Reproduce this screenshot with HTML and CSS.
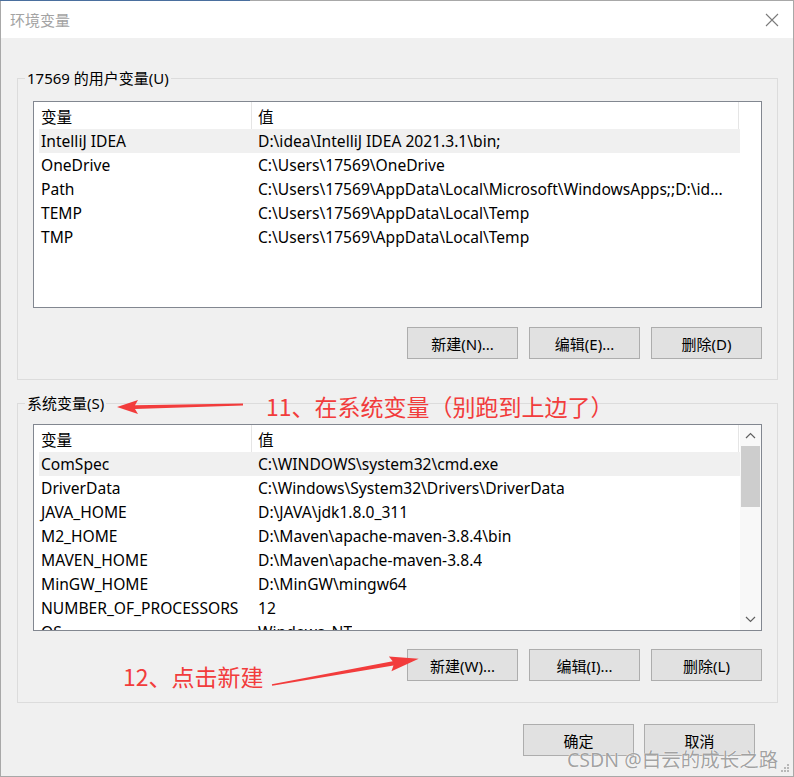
FILE: index.html
```html
<!DOCTYPE html>
<html lang="zh-CN">
<head>
<meta charset="utf-8">
<title>环境变量</title>
<link rel="stylesheet" href="styles.css">
</head>
<body>
<div class="window">
  <div class="titlebar">
    <span class="title">环境变量</span>
    <svg class="close" width="14" height="14" viewBox="0 0 14 14"><path d="M1 1L13 13M13 1L1 13" stroke="#7a7a7a" stroke-width="1.1" fill="none"/></svg>
  </div>
  <div class="content">
    <fieldset class="group group-user">
      <legend>17569 的用户变量(U)</legend>
      <div class="list">
        <div class="list-body">
          <div class="list-head"><div class="hcell hname">变量</div><div class="hcell hval">值</div></div>
          <div class="row sel"><div class="cname">IntelliJ IDEA</div><div class="cval">D:\idea\IntelliJ IDEA 2021.3.1\bin;</div></div>
          <div class="row"><div class="cname">OneDrive</div><div class="cval">C:\Users\17569\OneDrive</div></div>
          <div class="row"><div class="cname">Path</div><div class="cval">C:\Users\17569\AppData\Local\Microsoft\WindowsApps;;D:\id...</div></div>
          <div class="row"><div class="cname">TEMP</div><div class="cval">C:\Users\17569\AppData\Local\Temp</div></div>
          <div class="row"><div class="cname">TMP</div><div class="cval">C:\Users\17569\AppData\Local\Temp</div></div>
        </div>
      </div>
      <div class="btns">
        <button class="btn">新建(N)...</button>
        <button class="btn">编辑(E)...</button>
        <button class="btn">删除(D)</button>
      </div>
    </fieldset>

    <fieldset class="group group-sys">
      <legend>系统变量(S)</legend>
      <div class="list">
        <div class="list-body">
          <div class="list-head"><div class="hcell hname">变量</div><div class="hcell hval">值</div></div>
          <div class="row sel"><div class="cname">ComSpec</div><div class="cval">C:\WINDOWS\system32\cmd.exe</div></div>
          <div class="row"><div class="cname">DriverData</div><div class="cval">C:\Windows\System32\Drivers\DriverData</div></div>
          <div class="row"><div class="cname">JAVA_HOME</div><div class="cval">D:\JAVA\jdk1.8.0_311</div></div>
          <div class="row"><div class="cname">M2_HOME</div><div class="cval">D:\Maven\apache-maven-3.8.4\bin</div></div>
          <div class="row"><div class="cname">MAVEN_HOME</div><div class="cval">D:\Maven\apache-maven-3.8.4</div></div>
          <div class="row"><div class="cname">MinGW_HOME</div><div class="cval">D:\MinGW\mingw64</div></div>
          <div class="row"><div class="cname">NUMBER_OF_PROCESSORS</div><div class="cval">12</div></div>
          <div class="row"><div class="cname">OS</div><div class="cval">Windows_NT</div></div>
        </div>
        <div class="scrollbar">
          <div class="sb-btn"><svg width="11" height="7" viewBox="0 0 11 7"><path d="M1 6L5.5 1.5L10 6" stroke="#606060" stroke-width="1.2" fill="none"/></svg></div>
          <div class="sb-thumb"></div>
          <div class="sb-track"></div>
          <div class="sb-btn"><svg width="11" height="7" viewBox="0 0 11 7"><path d="M1 1L5.5 5.5L10 1" stroke="#606060" stroke-width="1.2" fill="none"/></svg></div>
        </div>
      </div>
      <div class="btns btns-sys">
        <button class="btn">新建(W)...</button>
        <button class="btn">编辑(I)...</button>
        <button class="btn">删除(L)</button>
      </div>
    </fieldset>

    <div class="footer">
      <button class="btn">确定</button>
      <button class="btn">取消</button>
    </div>
  </div>

  <div class="note note-11">11、在系统变量（别跑到上边了）</div>
  <svg class="arrow arrow-11" width="140" height="24" viewBox="0 0 140 24">
    <polygon points="7,12 28,5 25,10.2 133,8.6 133,10.6 25,14 28,19" fill="#f23c3c"/>
  </svg>
  <div class="note note-12">12、点击新建</div>
  <svg class="arrow arrow-12" width="160" height="50" viewBox="0 0 160 50">
    <g transform="translate(7,40) rotate(-10.1)">
      <polygon points="0,-0.8 123,-2.2 120,-7.5 149,0 120,7.5 123,2.2 0,0.8" fill="#f23c3c"/>
    </g>
  </svg>
  <div class="watermark">CSDN @白云的成长之路</div>
  <svg class="grip" width="10" height="10" viewBox="0 0 10 10">
    <rect x="7" y="1" width="2" height="2" fill="#b8b8b8"/>
    <rect x="4" y="4" width="2" height="2" fill="#b8b8b8"/>
    <rect x="7" y="4" width="2" height="2" fill="#b8b8b8"/>
    <rect x="1" y="7" width="2" height="2" fill="#b8b8b8"/>
    <rect x="4" y="7" width="2" height="2" fill="#b8b8b8"/>
    <rect x="7" y="7" width="2" height="2" fill="#b8b8b8"/>
  </svg>
</div>
</body>
</html>
```

FILE: styles.css
```css
* { box-sizing: border-box; }
html, body { margin: 0; padding: 0; }
body {
  width: 794px;
  height: 777px;
  overflow: hidden;
  font-family: "Noto Sans", "Noto Sans CJK SC", sans-serif;
  font-size: 15px;
  color: #000;
  background: #f0f0f0;
}
.window {
  position: relative;
  width: 794px;
  height: 777px;
  background: #f0f0f0;
  border-left: 1px solid #a8a8a8;
  border-right: 1px solid #a8a8a8;
  border-bottom: 1px solid #a8a8a8;
  border-top: 1px solid transparent;
}
.window::before {
  content: "";
  position: absolute;
  left: -1px;
  right: -1px;
  top: -1px;
  height: 1px;
  background: linear-gradient(to right, #4a6f9e 0, #4a6f9e 250px, #a8a8a8 250px);
}
.titlebar {
  height: 37px;
  background: #fff;
  display: flex;
  align-items: center;
  justify-content: space-between;
  padding: 0 14px 0 9px;
}
.title {
  font-family: "Noto Sans CJK SC", sans-serif;
  font-size: 15px;
  color: #a3a3a3;
}
.close { display: block; margin-top: 1px; }
.content {
  padding: 30px 15px 0 16px;
}
.group {
  margin: 0;
  border: 1px solid #dcdcdc;
  padding: 13px 15px 20px;
  min-width: 0;
}
.group legend {
  padding: 0 2px;
  margin-left: -8px;
  line-height: 20px;
  font-size: 15px;
}
.group-sys {
  margin-top: 13px;
  padding-top: 11px;
  padding-bottom: 21px;
}
.list {
  height: 207px;
  border: 1px solid #828790;
  background: #fff;
  display: flex;
  overflow: hidden;
  font-size: 15.6px;
}
.list-body {
  width: 706px;
  flex: none;
}
.list-head {
  display: flex;
  height: 27px;
  width: 705px;
}
.hcell {
  padding-top: 3px;
  line-height: 24px;
  border-right: 1px solid #e5e5e5;
  white-space: nowrap;
}
.hname { width: 218px; padding-left: 7px; }
.hval { width: 487px; padding-left: 6px; }
.row {
  display: flex;
  height: 24px;
  line-height: 25px;
  margin-left: 5px;
  width: 701px;
  white-space: nowrap;
}
.row.sel { background: #f0f0f0; }
.cname { width: 212px; padding-left: 2px; flex: none; }
.cval { padding-left: 7px; overflow: hidden; }
.scrollbar {
  width: 21px;
  flex: none;
  display: flex;
  flex-direction: column;
  background: #f8f8f8;
}
.sb-btn {
  height: 21px;
  display: flex;
  align-items: center;
  justify-content: center;
  flex: none;
}
.sb-thumb {
  height: 61px;
  margin: 0 1px;
  background: #cdcdcd;
  flex: none;
}
.sb-track { flex: 1; }
.btns {
  display: flex;
  justify-content: flex-end;
  gap: 11px;
  margin-top: 19px;
}
.btns-sys { margin-top: 18px; }
.btn {
  width: 111px;
  height: 32px;
  padding: 0;
  margin: 0;
  background: #e1e1e1;
  border: 1px solid #adadad;
  font-family: "Noto Sans", "Noto Sans CJK SC", sans-serif;
  font-size: 15px;
  color: #000;
}
.footer {
  display: flex;
  justify-content: flex-end;
  gap: 10px;
  margin-top: 21px;
  padding-right: 23px;
}
.note {
  position: absolute;
  font-family: "Noto Sans CJK SC", sans-serif;
  font-size: 23px;
  line-height: 30px;
  color: #f23c3c;
  white-space: nowrap;
}
.note-11 { left: 265px; top: 390px; }
.note-12 { left: 122px; top: 660px; }
.arrow { position: absolute; display: block; }
.arrow-11 { left: 109px; top: 394px; }
.arrow-12 { left: 264px; top: 644px; }
.watermark {
  position: absolute;
  left: 566px;
  top: 745px;
  font-family: "Noto Sans", "Noto Sans CJK SC", sans-serif;
  font-size: 19.5px;
  line-height: 28px;
  color: rgba(120, 120, 120, 0.7);
  text-shadow: 0 0 1px #fff, 0 0 1px #fff;
  white-space: nowrap;
}
.grip { position: absolute; right: 3px; bottom: 3px; }
```
